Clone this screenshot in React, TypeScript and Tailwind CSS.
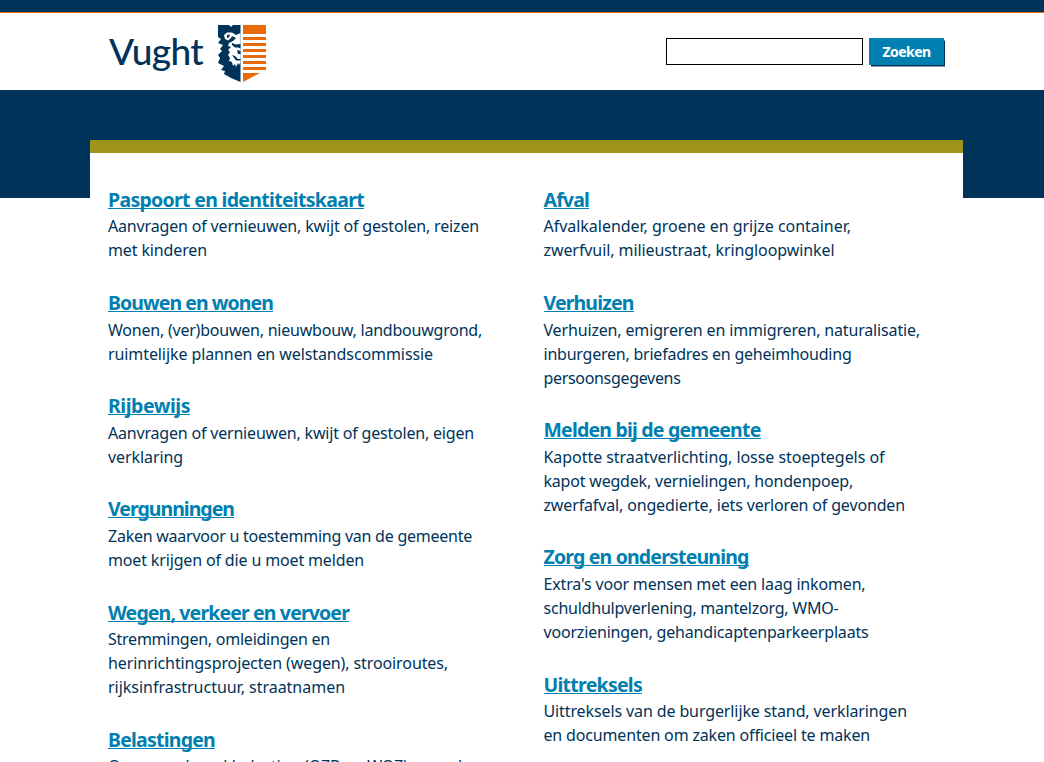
import { useLayoutEffect, useRef } from "react";

type Line = [text: string, width: number];
type Topic = { title: Line; lines: Line[]; top: string; gap: string };

const left: Topic[] = [
  { title: ["Paspoort en identiteitskaart", 256], top: "", gap: "pt-[2px]", lines: [["Aanvragen of vernieuwen, kwijt of gestolen, reizen", 371], ["met kinderen", 99]] },
  { title: ["Bouwen en wonen", 165], top: "pt-[29px]", gap: "pt-[3px]", lines: [["Wonen, (ver)bouwen, nieuwbouw, landbouwgrond,", 374], ["ruimtelijke plannen en welstandscommissie", 325]] },
  { title: ["Rijbewijs", 82], top: "pt-[28px]", gap: "pt-[3px]", lines: [["Aanvragen of vernieuwen, kwijt of gestolen, eigen", 366], ["verklaring", 75]] },
  { title: ["Vergunningen", 126], top: "pt-[28px]", gap: "pt-[3px]", lines: [["Zaken waarvoor u toestemming van de gemeente", 364], ["moet krijgen of die u moet melden", 256]] },
  { title: ["Wegen, verkeer en vervoer", 241], top: "pt-[29px]", gap: "pt-[2px]", lines: [["Stremmingen, omleidingen en", 222], ["herinrichtingsprojecten (wegen), strooiroutes,", 340], ["rijksinfrastructuur, straatnamen", 237]] },
  { title: ["Belastingen", 107], top: "pt-[29px]", gap: "pt-[2px]", lines: [["Onroerendezaakbelasting (OZB en WOZ), waarde", 363]] },
];

const right: Topic[] = [
  { title: ["Afval", 45.5], top: "", gap: "pt-[2px]", lines: [["Afvalkalender, groene en grijze container,", 307.5], ["zwerfvuil, milieustraat, kringloopwinkel", 291]] },
  { title: ["Verhuizen", 90], top: "pt-[29px]", gap: "pt-[3px]", lines: [["Verhuizen, emigreren en immigreren, naturalisatie,", 376.5], ["inburgeren, briefadres en geheimhouding", 308], ["persoonsgegevens", 137]] },
  { title: ["Melden bij de gemeente", 217], top: "pt-[28px]", gap: "pt-[3px]", lines: [["Kapotte straatverlichting, losse stoeptegels of", 341], ["kapot wegdek, vernielingen, hondenpoep,", 309.5], ["zwerfafval, ongedierte, iets verloren of gevonden", 361.5]] },
  { title: ["Zorg en ondersteuning", 205], top: "pt-[28px]", gap: "pt-[3px]", lines: [["Extra's voor mensen met een laag inkomen,", 322], ["schuldhulpverlening, mantelzorg, WMO-", 295], ["voorzieningen, gehandicaptenparkeerplaats", 325]] },
  { title: ["Uittreksels", 98.5], top: "pt-[29px]", gap: "pt-[2px]", lines: [["Uittreksels van de burgerlijke stand, verklaringen", 363.5], ["en documenten om zaken officieel te maken", 326.5]] },
];

/** One line of text, tracked so that it fills the given measure. */
function Fit({ line: [text, width] }: { line: Line }) {
  const ref = useRef<HTMLSpanElement>(null);
  useLayoutEffect(() => {
    const el = ref.current;
    if (!el) return;
    el.style.letterSpacing = "0px";
    const natural = el.getBoundingClientRect().width;
    el.style.letterSpacing = `${(width - natural) / text.length}px`;
  }, [text, width]);
  return <span ref={ref} className="inline-block whitespace-nowrap">{text}</span>;
}

function Column({ topics }: { topics: Topic[] }) {
  return (
    <div className="w-[435.5px] shrink-0">
      {topics.map((t) => (
        <section key={t.title[0]} className={t.top}>
          <h2 className="h-6 text-[19.5px] leading-6 font-bold">
            <a href="#" className="inline-block h-[21px] border-b border-[#007fb0] leading-6 text-[#007fb0]"><Fit line={t.title} /></a>
          </h2>
          <div className={t.gap}>
            {t.lines.map((l) => (
              <p key={l[0]} className="h-6 text-[16px] leading-6"><Fit line={l} /></p>
            ))}
          </div>
        </section>
      ))}
    </div>
  );
}

function Logo() {
  return (
    <a href="#" className="flex items-start">
      <span className="w-[109px] pt-[4px] font-['Lato'] text-[37px] leading-[44px] font-medium text-[#003359]"><Fit line={["Vught", 94]} /></span>
      <svg width="48" height="58" viewBox="0 0 48 58" aria-hidden="true">
        <path fill="#003359" d="M0 0H11L13 2L15 0H22.5V57L13 53L6 49L7 46L3 45L6 41L0 38L2 33L0 30L4 26L2 24L5 20L0 18L3 14L0 12Z" />
        <path fill="#fff" d="M22.5 8L18 10L14 7.500L9 7.500L6 10L7 14L10 15.5L13 13L14 11L18 13L15 16L11 18L10 21L13 22L10 25L12 27L10 30L12 33L11 36L14 37L15 41L17 39L18 42L20 38L21 40L22.500 37Z" />
        <path fill="#003359" d="M9 10L12 9.500L11 12.500L9 13ZM14 18L18 19.500L22.500 19V23.500L20 22.500L17 22.500L14 20ZM19 25L22.500 26V29H20ZM14 30L17 31L20 34L22.500 34V35.500L18 35.500Z" />
        <path fill="#ea6a0a" d="M25 0H48V9H25ZM25 12H48V15H25ZM25 18H48V21H25ZM25 24H48V27H25ZM25 30H48V33H25ZM25 36H48V39H25ZM25 42H48V45H25ZM25 48H42L25 57Z" />
      </svg>
    </a>
  );
}

export default function App() {
  return (
    <div className="h-[762px] overflow-hidden bg-white font-['Noto_Sans',sans-serif] text-[#003359]">
      <div className="h-[13px] border-b border-[#ea6a0a] bg-[#003359]" />
      <header className="flex h-[77px] justify-between pt-[12px] pr-[100px] pl-[109px]">
        <Logo />
        <form className="flex items-start gap-[6px] pt-[13px]">
          <input aria-label="Zoeken" className="h-[27px] w-[197px] border border-black bg-white px-1 outline-none" />
          <button type="button" className="h-[27px] w-[75px] bg-[#007fb0] text-[14px] leading-[26px] font-bold text-white shadow-[1.5px_2px_0_-0.5px_#003359]"><Fit line={["Zoeken", 48]} /></button>
        </form>
      </header>
      <div className="h-[672px] bg-[linear-gradient(#003359_108px,white_108px)] pt-[50px] pl-[90px]">
        <main className="flex h-[622px] w-[873px] overflow-hidden border-t-[13px] border-[#9f941b] bg-white pt-[35px] pl-[18px]">
          <Column topics={left} />
          <Column topics={right} />
        </main>
      </div>
    </div>
  );
}
